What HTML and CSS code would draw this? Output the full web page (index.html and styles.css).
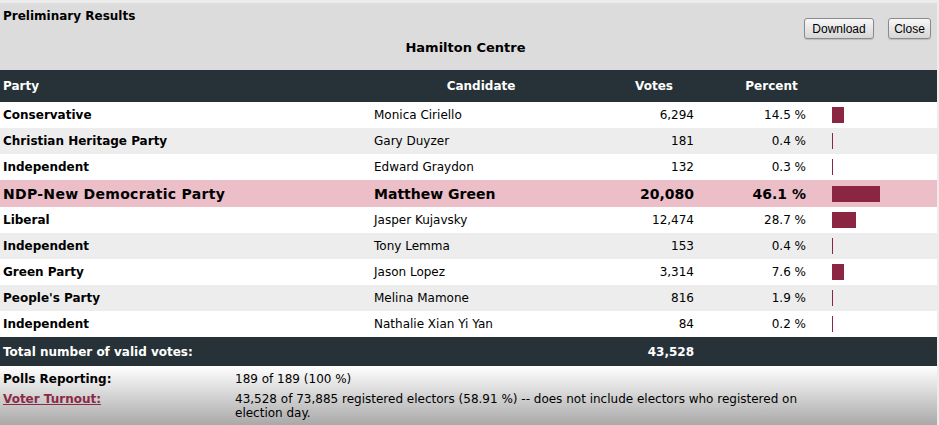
FILE: index.html
```html
<!DOCTYPE html>
<html>
<head>
<meta charset="utf-8">
<title>Preliminary Results - Hamilton Centre</title>
<link rel="stylesheet" href="styles.css">
</head>
<body>
<div class="panel">
  <div class="panel-head">
    <div class="head-top">
      <div class="title">Preliminary Results</div>
      <div class="actions">
        <button class="btn btn-download">Download</button>
        <button class="btn btn-close">Close</button>
      </div>
    </div>
    <div class="district">Hamilton Centre</div>
  </div>
  <table class="results">
    <colgroup>
      <col class="c-party"><col class="c-cand"><col class="c-votes"><col class="c-pct"><col class="c-bar">
    </colgroup>
    <thead>
      <tr>
        <th class="h-party">Party</th>
        <th class="h-cand">Candidate</th>
        <th class="h-votes">Votes</th>
        <th class="h-pct">Percent</th>
        <th></th>
      </tr>
    </thead>
    <tbody>
      <tr><td class="party">Conservative</td><td class="cand">Monica Ciriello</td><td class="num">6,294</td><td class="num">14.5 %</td><td class="barcell"><span class="bar" style="width:12px"></span></td></tr>
      <tr><td class="party">Christian Heritage Party</td><td class="cand">Gary Duyzer</td><td class="num">181</td><td class="num">0.4 %</td><td class="barcell"><span class="bar" style="width:1px"></span></td></tr>
      <tr><td class="party">Independent</td><td class="cand">Edward Graydon</td><td class="num">132</td><td class="num">0.3 %</td><td class="barcell"><span class="bar" style="width:1px"></span></td></tr>
      <tr class="winner"><td class="party">NDP-New Democratic Party</td><td class="cand">Matthew Green</td><td class="num">20,080</td><td class="num">46.1 %</td><td class="barcell"><span class="bar" style="width:48px"></span></td></tr>
      <tr><td class="party">Liberal</td><td class="cand">Jasper Kujavsky</td><td class="num">12,474</td><td class="num">28.7 %</td><td class="barcell"><span class="bar" style="width:24px"></span></td></tr>
      <tr><td class="party">Independent</td><td class="cand">Tony Lemma</td><td class="num">153</td><td class="num">0.4 %</td><td class="barcell"><span class="bar" style="width:1px"></span></td></tr>
      <tr><td class="party">Green Party</td><td class="cand">Jason Lopez</td><td class="num">3,314</td><td class="num">7.6 %</td><td class="barcell"><span class="bar" style="width:12px"></span></td></tr>
      <tr><td class="party">People's Party</td><td class="cand">Melina Mamone</td><td class="num">816</td><td class="num">1.9 %</td><td class="barcell"><span class="bar" style="width:1px"></span></td></tr>
      <tr><td class="party">Independent</td><td class="cand">Nathalie Xian Yi Yan</td><td class="num">84</td><td class="num">0.2 %</td><td class="barcell"><span class="bar" style="width:1px"></span></td></tr>
    </tbody>
    <tfoot>
      <tr><td class="tot-label" colspan="2">Total number of valid votes:</td><td class="num">43,528</td><td></td><td></td></tr>
    </tfoot>
  </table>
  <div class="summary">
    <div class="s-label">Polls Reporting:</div>
    <div class="s-value">189 of 189 (100 %)</div>
    <div class="s-label"><a class="s-link" href="#">Voter Turnout:</a></div>
    <div class="s-value">43,528 of 73,885 registered electors (58.91 %) -- does not include electors who registered on election day.</div>
  </div>
</div>
</body>
</html>
```

FILE: styles.css
```css
html, body {
  margin: 0;
  padding: 0;
}
body {
  background: #ececec;
  padding-top: 3px;
  font-family: "DejaVu Sans", Verdana, sans-serif;
  font-size: 12px;
  color: #000;
  overflow: hidden;
}
.panel {
  width: 937px;
}
.panel-head {
  box-sizing: border-box;
  height: 67px;
  background: #dcdcdc;
  padding: 5px 6px 0 3px;
}
.head-top {
  display: flex;
  justify-content: space-between;
  align-items: flex-start;
}
.title {
  font-weight: bold;
  font-size: 12px;
  line-height: 16px;
}
.actions {
  display: flex;
  gap: 14px;
  margin-top: 10px;
}
.btn {
  box-sizing: border-box;
  height: 21px;
  padding: 0;
  font-family: "Liberation Sans", Arial, sans-serif;
  font-size: 12px;
  color: #000;
  background: linear-gradient(#f7f7f7, #d6d6d6);
  border: 1px solid #8a8a8a;
  border-radius: 3px;
  box-shadow: 0 1px 1px rgba(0,0,0,0.15);
  text-align: center;
}
.btn-download { width: 70px; }
.btn-close { width: 43px; }
.district {
  margin-top: 1px;
  text-align: center;
  font-weight: bold;
  font-size: 13px;
  line-height: 16px;
  padding-right: 3px;
}
.results {
  width: 937px;
  table-layout: fixed;
  border-collapse: collapse;
  border-spacing: 0;
}
.c-party { width: 371px; }
.c-cand { width: 243px; }
.c-votes { width: 83px; }
.c-pct { width: 112px; }
.c-bar { width: 128px; }
.results th,
.results td {
  padding: 0;
  white-space: nowrap;
}
.results thead tr {
  height: 32px;
  background: #263238;
  color: #fff;
}
.results th {
  font-weight: bold;
  font-size: 12px;
  vertical-align: middle;
}
.results .h-party { text-align: left; padding-left: 3px; }
.results .h-cand { text-align: center; padding-right: 23px; }
.results .h-votes { text-align: center; padding-right: 3px; }
.results .h-pct { text-align: center; padding-left: 37px; }
.results tbody tr {
  height: 26px;
  background: #fff;
}
.results tbody tr:nth-child(even) {
  background: #ededed;
}
.results tbody tr.winner {
  height: 27px;
  background: #ebbec8;
  font-size: 14px;
  font-weight: bold;
}
.results tr.winner .party {
  letter-spacing: 0.3px;
}
.results .party {
  font-weight: bold;
  padding-left: 3px;
}
.results .cand {
  padding-left: 3px;
}
.results .num {
  text-align: right;
  padding-right: 3px;
}
.results .barcell {
  padding-left: 23px;
  line-height: 0;
}
.bar {
  display: inline-block;
  height: 16px;
  background: #8b2642;
  vertical-align: middle;
}
.results tfoot tr {
  height: 29px;
  background: #263238;
  color: #fff;
  font-weight: bold;
}
.results .tot-label {
  padding-left: 3px;
}
.summary {
  box-sizing: border-box;
  height: 59px;
  display: grid;
  grid-template-columns: 232px 600px;
  row-gap: 6px;
  padding: 6px 0 0 3px;
  background: linear-gradient(#ffffff, #a9a9a9);
  line-height: 14px;
  align-content: start;
}
.s-label {
  font-weight: bold;
}
.s-link {
  color: #8b2946;
  text-decoration: underline;
}
```
